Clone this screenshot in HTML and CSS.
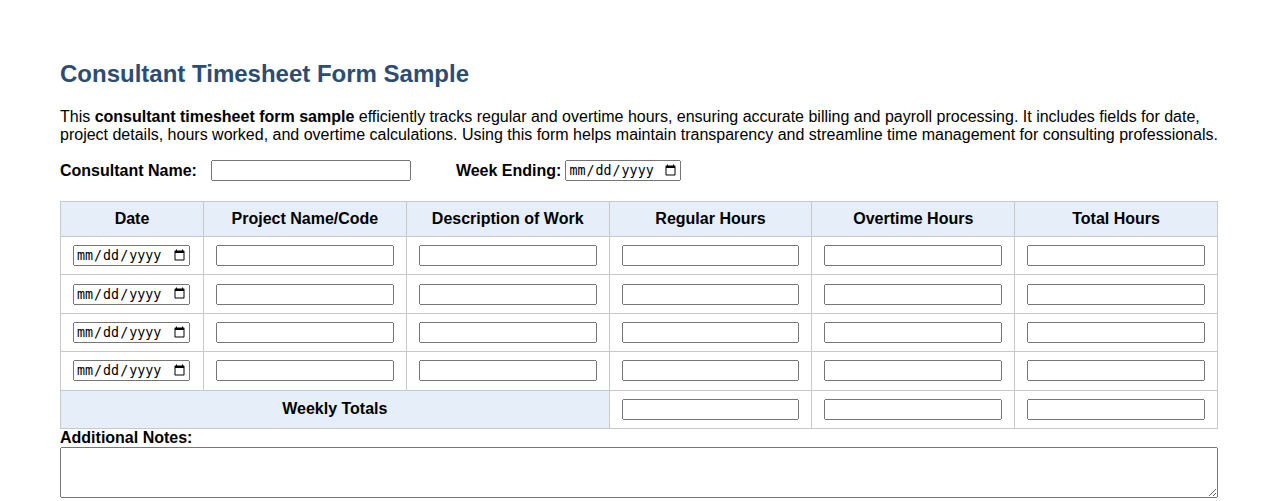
FILE: index.html
```html
<!DOCTYPE html>
<html lang="en">
<head>
<meta charset="utf-8">
<title>Consultant Timesheet Form Sample</title>
<link rel="stylesheet" href="styles.css">
</head>
<body>
<div class="page">
  <h2 class="title">Consultant Timesheet Form Sample</h2>
  <p class="intro">This <strong>consultant timesheet form sample</strong> efficiently tracks regular and overtime hours, ensuring accurate billing and payroll processing. It includes fields for date, project details, hours worked, and overtime calculations. Using this form helps maintain transparency and streamline time management for consulting professionals.</p>
  <div class="info-row">
    <label class="lbl lbl-name">Consultant Name:</label>
    <input type="text" class="name-input">
    <label class="lbl lbl-week">Week Ending:</label>
    <input type="date" class="week-input">
  </div>
  <table class="sheet">
    <colgroup>
      <col class="c-date"><col class="c-std"><col class="c-std"><col class="c-std"><col class="c-std"><col class="c-std">
    </colgroup>
    <thead>
      <tr>
        <th>Date</th><th>Project Name/Code</th><th>Description of Work</th><th>Regular Hours</th><th>Overtime Hours</th><th>Total Hours</th>
      </tr>
    </thead>
    <tbody>
      <tr><td><input type="date" class="date-cell"></td><td><input type="text" class="full"></td><td><input type="text" class="full"></td><td><input type="text" class="full"></td><td><input type="text" class="full"></td><td><input type="text" class="full"></td></tr>
      <tr><td><input type="date" class="date-cell"></td><td><input type="text" class="full"></td><td><input type="text" class="full"></td><td><input type="text" class="full"></td><td><input type="text" class="full"></td><td><input type="text" class="full"></td></tr>
      <tr><td><input type="date" class="date-cell"></td><td><input type="text" class="full"></td><td><input type="text" class="full"></td><td><input type="text" class="full"></td><td><input type="text" class="full"></td><td><input type="text" class="full"></td></tr>
      <tr><td><input type="date" class="date-cell"></td><td><input type="text" class="full"></td><td><input type="text" class="full"></td><td><input type="text" class="full"></td><td><input type="text" class="full"></td><td><input type="text" class="full"></td></tr>
      <tr><td colspan="3" class="totals">Weekly Totals</td><td><input type="text" class="full"></td><td><input type="text" class="full"></td><td><input type="text" class="full"></td></tr>
    </tbody>
  </table>
  <label class="notes-label">Additional Notes:</label>
  <textarea class="notes"></textarea>
</div>
</body>
</html>
```

FILE: styles.css
```css
body {
  margin: 0;
  font-family: "Liberation Sans", Arial, sans-serif;
  color: #000;
  background: #fff;
}
.page {
  padding: 40px 60px;
}
.title {
  font-size: 24px;
  font-weight: bold;
  color: #2b4d73;
  margin: 20px 0;
}
.intro {
  font-size: 16px;
  margin: 16px 0;
  line-height: 18px;
}
.info-row {
  display: flex;
  align-items: center;
  margin-bottom: 20px;
}
.lbl {
  font-weight: bold;
  font-size: 16px;
}
.lbl-name {
  margin-right: 14px;
}
.name-input {
  width: 200px;
  box-sizing: border-box;
  height: 21px;
  margin-right: 45px;
}
.lbl-week {
  margin-right: 4px;
}
.week-input {
  width: 116px;
  height: 21px;
  box-sizing: border-box;
}
.sheet {
  width: 100%;
  border-collapse: collapse;
  table-layout: fixed;
}
.c-date { width: 143px; }
.sheet th,
.sheet td {
  border: 1px solid #c8c8c8;
  padding: 8px 12px;
  font-size: 16px;
}
.sheet th {
  background: #e6eff9;
  font-weight: bold;
  text-align: center;
}
.sheet td {
  height: 21.4px;
}
.sheet .totals {
  background: #e6eff9;
  font-weight: bold;
  text-align: center;
}
.date-cell {
  width: 117px;
  height: 21px;
  box-sizing: border-box;
  display: block;
}
.full {
  width: 100%;
  box-sizing: border-box;
  height: 21px;
  display: block;
}
.notes-label {
  display: block;
  font-weight: bold;
  font-size: 16px;
}
.notes {
  display: block;
  width: 100%;
  box-sizing: border-box;
  height: 51px;
}
```
